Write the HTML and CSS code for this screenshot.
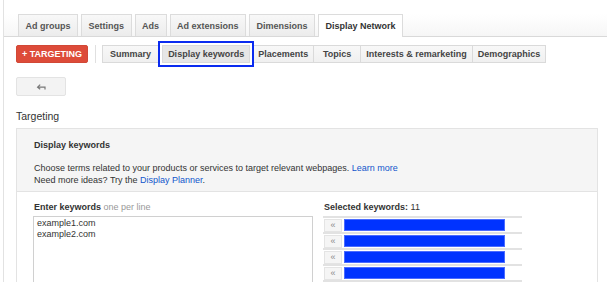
FILE: index.html
```html
<!DOCTYPE html>
<html lang="en">
<head>
  <meta http-equiv="Content-Type" content="text/html; charset=utf-8" />
  <title>Display keywords</title>
  <link rel="stylesheet" href="styles.css">
</head>
<body>
  <div class="page">
    <div class="tabs">
      <div class="tab">Ad groups</div>
      <div class="tab">Settings</div>
      <div class="tab">Ads</div>
      <div class="tab">Ad extensions</div>
      <div class="tab">Dimensions</div>
      <div class="tab tab-active">Display Network</div>
    </div>
    <div class="toolbar">
      <button type="button" class="btn-red">+ TARGETING</button>
      <div class="sep"></div>
      <div class="btn-group">
        <button type="button" class="btn btn-summary">Summary</button>
        <button type="button" class="btn btn-selected">Display keywords</button>
        <button type="button" class="btn">Placements</button>
        <button type="button" class="btn">Topics</button>
        <button type="button" class="btn">Interests &amp; remarketing</button>
        <button type="button" class="btn">Demographics</button>
      </div>
    </div>
    <button type="button" class="btn-back">
      <svg width="10" height="7" viewBox="0 0 10 7"><path d="M9 6.5V4.2H2.2M4.2 1.6L1.6 4.2L4.2 6.2" fill="none" stroke="#777" stroke-width="1.2"/></svg>
    </button>
    <h2 class="title">Targeting</h2>
    <div class="panel">
      <div class="panel-head">
        <div class="panel-title">Display keywords</div>
        <div class="panel-text">Choose terms related to your products or services to target relevant webpages. <a href="#">Learn more</a></div>
        <div class="panel-text">Need more ideas? Try the <a href="#">Display Planner</a>.</div>
      </div>
      <div class="panel-body">
        <div class="col-left">
          <div class="label"><b>Enter keywords</b> <span class="hint">one per line</span></div>
          <textarea class="keywords">example1.com
example2.com</textarea>
        </div>
        <div class="col-right">
          <div class="label"><b>Selected keywords:</b> 11</div>
          <div class="kw-list">
            <div class="kw-row"><span class="kw-btn">&laquo;</span><span class="kw-bar"></span></div>
            <div class="kw-row"><span class="kw-btn">&laquo;</span><span class="kw-bar"></span></div>
            <div class="kw-row"><span class="kw-btn">&laquo;</span><span class="kw-bar"></span></div>
            <div class="kw-row"><span class="kw-btn">&laquo;</span><span class="kw-bar"></span></div>
          </div>
        </div>
      </div>
    </div>
  </div>
</body>
</html>
```

FILE: styles.css
```css
body {
  margin: 0;
  font-family: "Liberation Sans", Arial, sans-serif;
  font-size: 9px;
  color: #444;
  overflow: hidden;
}
.page {
  margin-left: 3px;
  border-left: 1px solid #e2e2e2;
  padding-top: 14px;
  height: 268px;
  overflow: hidden;
}
.tabs {
  display: flex;
  height: 22px;
  padding-left: 14px;
  border-bottom: 1px solid #d9d9d9;
  background: linear-gradient(#fff, #f6f6f6);
}
.tab {
  display: flex;
  align-items: center;
  padding: 0 6.5px;
  margin-right: 3px;
  border: 1px solid #dcdcdc;
  border-bottom: none;
  background: linear-gradient(#f8f8f8, #ececec);
  font-weight: bold;
  color: #555;
}
.tab-active {
  background: #fff;
  color: #333;
  margin-bottom: -1px;
}
.toolbar {
  display: flex;
  align-items: center;
  margin: 7px 0 0 12px;
  height: 19px;
}
.btn-red {
  height: 18px;
  padding: 0 5px;
  border: 1px solid #d14836;
  border-radius: 2px;
  background: #dd4b39;
  color: #fff;
  font: bold 9px "Liberation Sans", Arial, sans-serif;
}
.sep {
  width: 1px;
  height: 18px;
  background: #e0e0e0;
  margin: 0 6px 0 7px;
}
.btn-group {
  display: flex;
}
.btn {
  height: 18px;
  min-width: 48px;
  padding: 0 5px;
  margin-right: -1px;
  border: 1px solid #dadada;
  background: linear-gradient(#f8f8f8, #f0f0f0);
  color: #444;
  font: bold 9px "Liberation Sans", Arial, sans-serif;
}
.btn-summary {
  padding: 0 7px;
}
.btn-selected {
  background: #e6e6e6;
  outline: 2px solid #0a2bf0;
  outline-offset: 2px;
  margin: 0 2px 0 4px;
  position: relative;
}
.btn-back {
  display: block;
  width: 50px;
  height: 19px;
  margin: 14px 0 0 12px;
  border: 1px solid #e3e3e3;
  border-radius: 2px;
  background: #f3f3f3;
  padding: 0;
}
.btn-back svg {
  display: block;
  margin: 0 auto;
}
.title {
  margin: 13px 0 0 12px;
  font-size: 10.5px;
  font-weight: normal;
  line-height: 14px;
  color: #333;
}
.panel {
  margin: 5px 0 0 12px;
  width: 580px;
  border: 1px solid #e3e3e3;
}
.panel-head {
  background: #f5f5f5;
  border-bottom: 1px solid #e3e3e3;
  padding: 10px 17px 5px;
}
.panel-title {
  font-weight: bold;
  line-height: 12px;
  color: #333;
  margin-bottom: 12px;
}
.panel-text {
  line-height: 11.5px;
  color: #333;
}
.panel-text a {
  color: #1155cc;
  text-decoration: none;
}
.panel-body {
  display: flex;
  padding: 9px 16px 0;
}
.col-left {
  width: 280px;
  margin-right: 10px;
}
.col-right {
  width: 199px;
}
.label {
  line-height: 12px;
  padding-left: 1px;
  margin-bottom: 3px;
  color: #333;
}
.hint {
  color: #999;
}
.keywords {
  display: block;
  box-sizing: border-box;
  width: 280px;
  height: 120px;
  margin: 0;
  padding: 1px 3px;
  border: 1px solid #d0d0d0;
  resize: none;
  font: 9px/11px "Liberation Sans", Arial, sans-serif;
  color: #333;
}
.kw-list {
  border-bottom: 2px solid #e2e2e2;
}
.kw-row {
  display: flex;
  align-items: center;
  height: 14px;
  border-top: 2px solid #e2e2e2;
}
.kw-btn {
  width: 16px;
  height: 11px;
  margin: 0 2px 0 1px;
  border: 1px solid #e4e4e4;
  background: #f5f5f5;
  color: #888;
  font-size: 9px;
  line-height: 10px;
  text-align: center;
}
.kw-bar {
  width: 159px;
  height: 10px;
  border: 1px solid #4a6bff;
  background: #0033ff;
}
```
